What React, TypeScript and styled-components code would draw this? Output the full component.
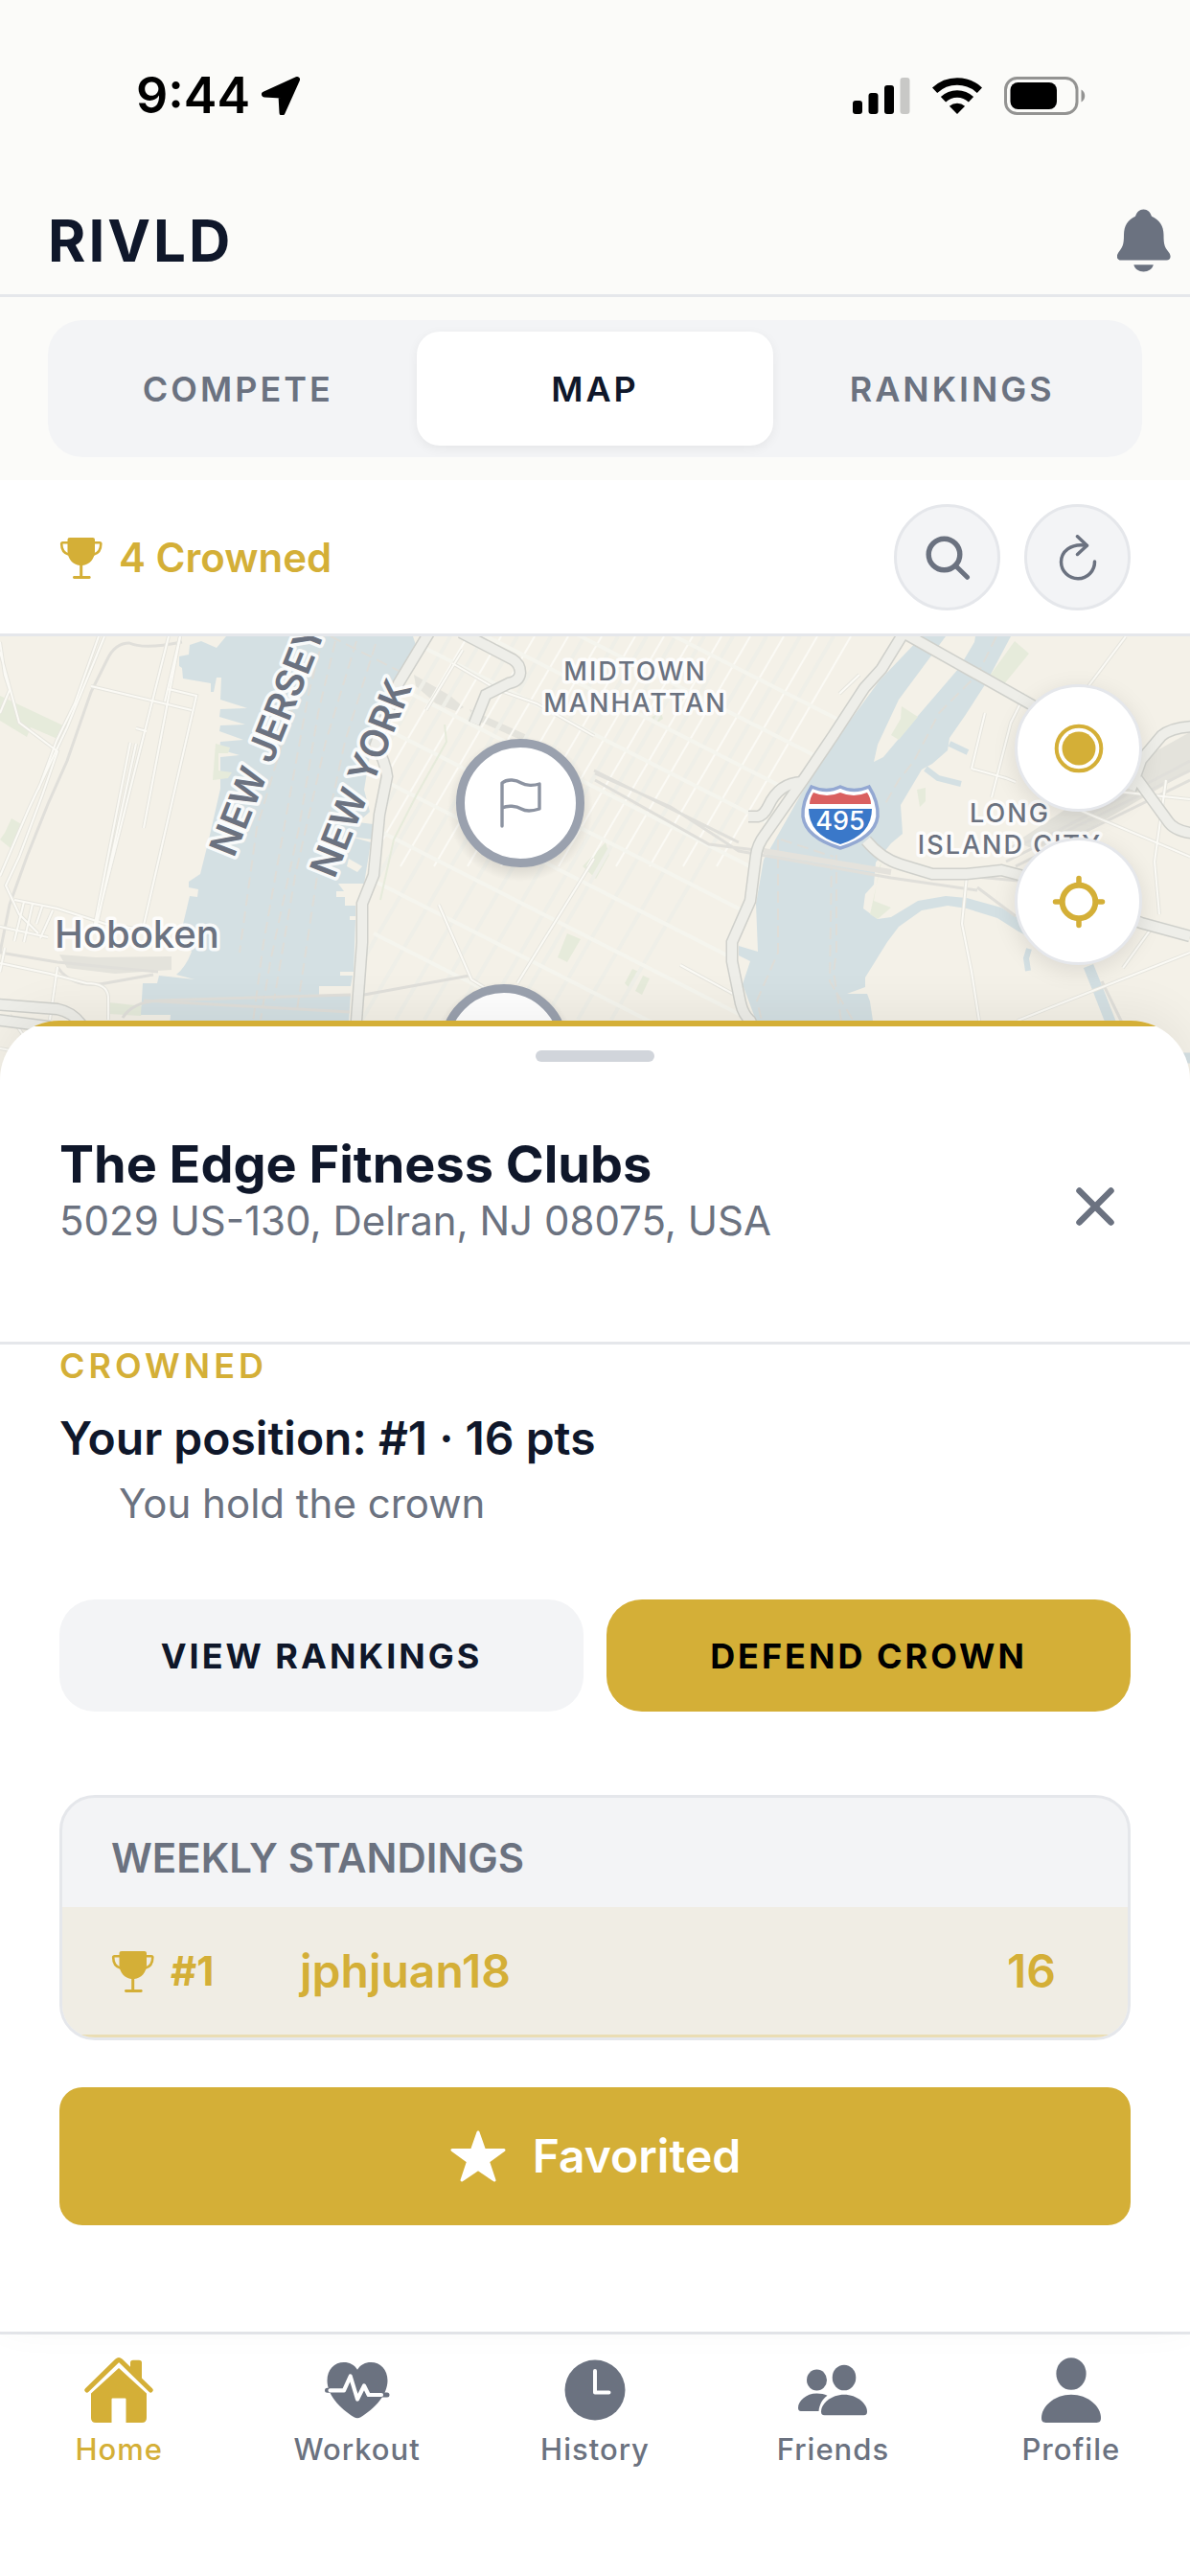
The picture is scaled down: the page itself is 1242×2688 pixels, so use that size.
import React from 'react';
import styled, { createGlobalStyle } from 'styled-components';

const colors = {
  gold: '#D4AF37',
  text: '#0F172A',
  secondaryText: '#6B7280',
  border: '#E5E7EB',
  surface: '#F3F4F6',
  background: '#FBFBF9',
  land: '#F4F1E8',
  water: '#D4E0E3',
  park: '#E6EBDB',
  roadCase: '#CFD0CB',
  road: '#EEEEE9',
  street: '#FBFAF5',
  marker: '#9AA1AE',
};

const GlobalStyle = createGlobalStyle`
  * {
    box-sizing: border-box;
  }
  body {
    margin: 0;
    background: #fff;
    color: ${colors.text};
    font-family: Inter, 'Liberation Sans', sans-serif;
  }
  button {
    font-family: inherit;
    border: none;
    padding: 0;
    cursor: pointer;
  }
  svg {
    display: block;
    flex: none;
  }
`;

const Screen = styled.div`
  min-height: 100vh;
  display: flex;
  flex-direction: column;
`;

const StatusBar = styled.div`
  display: flex;
  justify-content: space-between;
  align-items: center;
  height: 195px;
  padding: 4px 108px 0 142px;
  background: ${colors.background};
`;

const StatusGroup = styled.div<{ $gap: number }>`
  display: flex;
  align-items: center;
  gap: ${({ $gap }) => $gap}px;
`;

const Clock = styled.span`
  font-size: 52px;
  line-height: 66px;
  font-weight: 600;
  color: #000;
`;

const Header = styled.header`
  display: flex;
  justify-content: space-between;
  align-items: center;
  height: 115px;
  padding: 0 20px 0 50px;
  border-bottom: 3px solid ${colors.border};
  background: ${colors.background};
`;

const Brand = styled.h1`
  margin: 0;
  font-size: 60px;
  line-height: 72px;
  font-weight: 700;
  letter-spacing: 3px;
`;

const PlainButton = styled.button`
  display: flex;
  background: transparent;
`;

const SegmentWrap = styled.div`
  padding: 24px 50px;
  background: ${colors.background};
`;

const Segments = styled.div`
  display: flex;
  padding: 12px;
  border-radius: 36px;
  background: ${colors.surface};
`;

const Segment = styled.button<{ $active?: boolean }>`
  flex: 1;
  height: 119px;
  border-radius: 24px;
  font-size: 36px;
  line-height: 44px;
  font-weight: 600;
  letter-spacing: 3px;
  color: ${({ $active }) => ($active ? colors.text : colors.secondaryText)};
  background: ${({ $active }) => ($active ? '#fff' : 'transparent')};
  box-shadow: ${({ $active }) => ($active ? '0 3px 12px rgba(0, 0, 0, 0.06)' : 'none')};
`;

const Toolbar = styled.div`
  display: flex;
  justify-content: space-between;
  align-items: center;
  padding: 25px 62px 24px 62px;
  border-bottom: 3px solid ${colors.border};
`;

const CrownedCount = styled.div`
  display: flex;
  align-items: center;
  gap: 16px;
  font-size: 42px;
  line-height: 56px;
  font-weight: 600;
  color: ${colors.gold};
`;

const ToolbarActions = styled.div`
  display: flex;
  gap: 25px;
`;

const RoundButton = styled.button`
  display: flex;
  align-items: center;
  justify-content: center;
  width: 111px;
  height: 111px;
  border: 3px solid ${colors.border};
  border-radius: 50%;
  background: ${colors.surface};
`;

const MapArea = styled.div`
  position: relative;
  height: 464px;
  background: ${colors.land};
  overflow: hidden;
`;

const MapCanvas = styled.svg`
  width: 100%;
  height: 100%;
`;

const MapControls = styled.div`
  position: absolute;
  top: 50px;
  right: 50px;
  display: flex;
  flex-direction: column;
  gap: 27px;
`;

const MapButton = styled(RoundButton)`
  width: 133px;
  height: 133px;
  background: #fff;
  box-shadow: 0 6px 24px rgba(0, 0, 0, 0.1);
`;

const Sheet = styled.section`
  position: relative;
  flex: 1;
  margin-top: -63px;
  border-radius: 62px 62px 0 0;
  background: linear-gradient(${colors.gold} 0 6px, #fff 6px);
  box-shadow: 0 -12px 48px rgba(0, 0, 0, 0.06);
`;

const Handle = styled.div`
  padding: 31px 0 0;

  &::before {
    content: '';
    display: block;
    width: 124px;
    height: 12px;
    margin: 0 auto;
    border-radius: 6px;
    background: #d1d5db;
  }
`;

const SheetHeader = styled.div`
  display: flex;
  justify-content: space-between;
  align-items: flex-start;
  padding: 76px 62px 66px;
  border-bottom: 3px solid ${colors.border};
`;

const GymName = styled.h2`
  margin: 0;
  font-size: 54px;
  line-height: 62px;
  font-weight: 700;
`;

const Address = styled.p`
  margin: 0;
  font-size: 42px;
  line-height: 56px;
  color: ${colors.secondaryText};
`;

const CloseButton = styled(PlainButton)`
  align-items: center;
  justify-content: center;
  width: 74px;
  height: 150px;
`;

const SheetBody = styled.div`
  padding: 0 62px 111px;
`;

const StatusLabel = styled.div`
  font-size: 36px;
  line-height: 44px;
  font-weight: 600;
  letter-spacing: 4px;
  color: ${colors.gold};
`;

const Position = styled.div`
  margin-top: 24px;
  font-size: 48px;
  line-height: 60px;
  font-weight: 600;
`;

const Hint = styled.p`
  margin: 10px 0 0;
  padding-left: 62px;
  font-size: 42px;
  line-height: 56px;
  color: ${colors.secondaryText};
`;

const Actions = styled.div`
  display: flex;
  gap: 24px;
  margin-top: 72px;
`;

const ActionButton = styled.button<{ $primary?: boolean }>`
  flex: 1;
  height: 117px;
  border-radius: 37px;
  font-size: 36px;
  line-height: 44px;
  font-weight: 700;
  letter-spacing: 3px;
  color: ${({ $primary }) => ($primary ? '#000' : colors.text)};
  background: ${({ $primary }) => ($primary ? colors.gold : colors.surface)};
`;

const StandingsCard = styled.div`
  margin-top: 87px;
  border: 3px solid ${colors.border};
  border-radius: 37px;
  background: ${colors.surface};
  overflow: hidden;
`;

const StandingsTable = styled.table`
  width: 100%;
  border-collapse: separate;
  border-spacing: 0;
  text-align: left;
`;

const StandingsTitle = styled.th`
  height: 114px;
  padding: 12px 51px 0;
  font-size: 42px;
  line-height: 56px;
  font-weight: 600;
  color: ${colors.secondaryText};
`;

const Cell = styled.td`
  height: 136px;
  padding: 0;
  border-bottom: 3px solid #eaddb3;
  background: #f0ede4;
  font-size: 48px;
  line-height: 60px;
  font-weight: 600;
  color: ${colors.gold};
`;

const RankCell = styled(Cell)`
  width: 248px;
  padding-left: 51px;
`;

const ScoreCell = styled(Cell)`
  padding-right: 75px;
  text-align: right;
`;

const Rank = styled.div`
  display: flex;
  align-items: center;
  gap: 16px;
  font-size: 42px;
  font-weight: 700;
`;

const FavoriteButton = styled.button`
  display: flex;
  align-items: center;
  justify-content: center;
  gap: 27px;
  width: 100%;
  height: 144px;
  margin-top: 49px;
  border-radius: 24px;
  font-size: 48px;
  line-height: 60px;
  font-weight: 600;
  color: #fff;
  background: ${colors.gold};
`;

const TabBar = styled.nav`
  display: flex;
  padding: 21px 0 113px;
  border-top: 3px solid ${colors.border};
  background: #fff;
`;

const Tab = styled.a<{ $active?: boolean }>`
  flex: 1;
  display: flex;
  flex-direction: column;
  align-items: center;
  gap: 8px;
  font-size: 31px;
  line-height: 38px;
  font-weight: 500;
  letter-spacing: 1px;
  text-decoration: none;
  color: ${({ $active }) => ($active ? colors.gold : colors.secondaryText)};
`;

const LocationArrow = () => (
  <svg width="40" height="40" viewBox="0 0 40 40">
    <path d="M37 3 3 18.5 20.5 19.5 21.5 37.5Z" stroke="#000" strokeWidth="6" strokeLinejoin="round" />
  </svg>
);

const Signal = () => (
  <svg width="60" height="38" viewBox="0 0 60 38">
    <rect y="24" width="10" height="14" rx="3" />
    <rect x="16.5" y="16" width="10" height="22" rx="3" />
    <rect x="33" y="8" width="10" height="30" rx="3" />
    <rect x="49.5" width="10" height="38" rx="3" fill="#C8C8C6" />
  </svg>
);

const Wifi = () => (
  <svg width="52" height="38" viewBox="0 0 52 38">
    <g fill="none" stroke="#000" strokeWidth="7.6">
      <path d="M2.6 13.3A34 34 0 0 1 49.4 13.3" />
      <path d="M11.5 22.8A21 21 0 0 1 40.5 22.8" />
    </g>
    <path d="M26 38 17.9 29.8A12.3 12.3 0 0 1 34.1 29.8Z" />
  </svg>
);

const Battery = () => (
  <svg width="86" height="40" viewBox="0 0 86 40">
    <rect x="1.5" y="1.5" width="74.5" height="37" rx="12" fill="none" stroke="#939392" strokeWidth="3" />
    <rect x="6.5" y="6" width="48.5" height="28" rx="8" />
    <path d="M80.5 13.5c5 2.5 5 10.5 0 13Z" fill="#939392" />
  </svg>
);

const Bell = () => (
  <svg width="56" height="66" viewBox="0 0 56 66" fill={colors.secondaryText}>
    <path d="M27.5.5c4.5 0 7 3 8.5 7.3 8 3.5 12.5 10 12.5 19.2 0 11 1.2 13 5.5 18.5 3 4 1.5 8-2.5 8H4C-.2 53.5-1.5 49.5 1.3 45.500 5.6 39.5 7 38 7 27 7 17.8 11 11.3 19 7.8 20.5 3.5 23 .5 27.5.5Z" />
    <path d="M17.3 58.3h20.5c-1 4.2-5.3 7.2-10.3 7.2s-9.200-3-10.200-7.2Z" />
  </svg>
);

const Trophy = () => (
  <svg width="46" height="44" viewBox="0 0 46 44" fill={colors.gold}>
    <path d="M11 1h23.5c1.8 0 2.5.8 2.5 2.5v12C37 23 31 29.5 24.2 30v11h7c2 0 2 2.9 0 2.9H15.5c-2 0-2-2.900 0-2.900H21.2V30C14.5 29.5 8.5 23 8.5 15.5v-12C8.5 1.8 9.2 1 11 1Z" />
    <path d="M9 6.2H3.500c-1 0-1.300.5-1.300 1.300C2.200 13 5 17.500 10 18.800M36.500 6.200H42c1 0 1.300.5 1.300 1.300 0 5.500-2.800 10-7.800 11.300" fill="none" stroke={colors.gold} strokeWidth="2.6" />
  </svg>
);

const Search = () => (
  <svg width="48" height="48" viewBox="0 0 48 48" fill="none" stroke={colors.secondaryText} strokeLinecap="round">
    <circle cx="20.5" cy="20.5" r="16.3" strokeWidth="5.4" />
    <path d="M33 33 44.5 44.3" strokeWidth="5" />
  </svg>
);

const Refresh = () => (
  <svg width="48" height="48" viewBox="0 0 48 48" fill="none" stroke={colors.secondaryText} strokeWidth="3.5" strokeLinecap="round" strokeLinejoin="round">
    <path d="M32.500 10.800A17.600 17.600 0 1 0 41.500 27.800" stroke="none" />
    <path d="M33 11.200C16 8.500 6.500 18 6.500 28.500a17.500 17.500 0 0 0 35 -.5" />
    <path d="M23.500 1.800 33.500 11.200 23.500 20.500" />
  </svg>
);

const Target = () => (
  <svg width="56" height="56" viewBox="0 0 56 56">
    <circle cx="28" cy="28" r="23.3" fill="none" stroke={colors.gold} strokeWidth="4" />
    <circle cx="28" cy="28" r="17.5" fill={colors.gold} />
  </svg>
);

const Locate = () => (
  <svg width="56" height="56" viewBox="0 0 56 56" fill="none" stroke={colors.gold} strokeLinecap="round">
    <circle cx="28" cy="28" r="17.3" strokeWidth="6" />
    <path d="M28 3.5V9M28 47v5.5M3.5 28H9M47 28h5.5" strokeWidth="5.5" />
  </svg>
);

const Close = () => (
  <svg width="40" height="40" viewBox="0 0 40 40" stroke={colors.secondaryText} strokeWidth="6.5" strokeLinecap="round">
    <path d="M3.5 3.5 36.5 36.5M36.5 3.5 3.5 36.5" />
  </svg>
);

const Star = () => (
  <svg width="60" height="56" viewBox="0 0 60 56" fill="#fff" stroke="#fff" strokeWidth="3" strokeLinejoin="round">
    <path d="M30 3 36.5 21.5H57L40.5 33.5 47 53 30 41.5 13 53 19.5 33.5 3 21.5H23.5Z" />
  </svg>
);

const HomeIcon = () => (
  <svg width="72" height="72" viewBox="0 0 72 72" fill={colors.gold}>
    <path d="M48 18V8.5C48 6.5 49 5.7 51 5.7h6c2 0 3 .8 3 2.8V29Z" />
    <path d="M2.8 37 34 6.6Q36 4.6 38 6.6L69.2 37" fill="none" stroke={colors.gold} strokeWidth="5" strokeLinecap="round" strokeLinejoin="round" />
    <path d="M36 14 65 40.500V66q0 5-5 5H43.500V46.500q0-1-1-1h-13q-1 0-1 1V71H12q-5 0-5-5V40.500Z" />
  </svg>
);

const WorkoutIcon = () => (
  <svg width="72" height="72" viewBox="0 0 72 72" fill={colors.secondaryText}>
    <path d="M36 15.7C39 10.5 44.5 8 50 8c10 0 17.5 7.5 17.5 19 0 15-13 29-28 38.3-2.2 1.4-4.8 1.4-7 0C17.5 56 4.5 42 4.5 27 4.5 15.5 12 8 22 8c5.5 0 11 2.5 14 7.7Z" />
    <path d="M4.5 37.3H9M62 42h5" stroke={colors.secondaryText} strokeWidth="5" strokeLinecap="round" />
    <path d="M7.5 37.3H22L28.700 22.500 36 46.500 43 32.500 47.700 42H61" fill="none" stroke="#fff" strokeWidth="4.2" strokeLinecap="round" strokeLinejoin="round" />
  </svg>
);

const HistoryIcon = () => (
  <svg width="72" height="72" viewBox="0 0 72 72">
    <circle cx="36" cy="37" r="31.5" fill={colors.secondaryText} />
    <path d="M36 17V39.5H50.5" fill="none" stroke="#fff" strokeWidth="4" strokeLinecap="round" strokeLinejoin="round" />
  </svg>
);

const FriendsIcon = () => (
  <svg width="72" height="72" viewBox="0 0 72 72" fill={colors.secondaryText}>
    <ellipse cx="19.5" cy="26.5" rx="10.5" ry="11" />
    <path d="M19.5 40.5c4.5 0 8 .8 11 2.3-5.5 4-8.3 9.5-9 16.2H3c-2.2 0-3-1.3-3-3.5 0-7 8-15 19.5-15Z" />
    <ellipse cx="48" cy="24" rx="12.3" ry="13.3" />
    <path d="M48 41.7C61.5 41.7 72 51 72 59.5c0 2.6-1 3.8-3.5 3.8h-41c-2.5 0-3.5-1.2-3.5-3.8C24 51 34.5 41.7 48 41.7Z" />
  </svg>
);

const ProfileIcon = () => (
  <svg width="72" height="72" viewBox="0 0 72 72" fill={colors.secondaryText}>
    <ellipse cx="36" cy="20" rx="15.6" ry="16.8" />
    <path d="M36 41.7C53.5 41.7 67 54 67 66c0 3.4-1.2 4.9-4.5 4.9h-53C6.2 70.9 5 69.4 5 66 5 54 18.5 41.7 36 41.7Z" />
  </svg>
);

const highways = [
  'M944 -5 920 34 902 54 870 103 841 146 799 206 Q790 218 789 229L783 276 764 319V339L773 383Q776 395 783 401L815 466',
  'M946 -2 1076 71 1120 98',
  'M781 188H791Q797 187 802 177 813 153 837 152',
  'M904 213Q920 232 940 238L973 248H1009L1045 244 1064 249 1191 299 1242 313',
  'M1250 94Q1224 94 1212 104L1191 129 1180 160M1187 149 1219 193Q1226 204 1250 206',
  'M448 -4 416 49 392 113Q402 130 404 146L396 186 390 249 378 279V319L372 401 370 466',
  'M481 -4 535 24Q543 29 543 38 542 47 531 49L507 61 495 91',
  'M-5 384 60 389Q75 392 84 404L130 466',
  'M-5 400 50 407 90 430',
];

const streets = [
  'M103 0 78 70 59 109 40 160 M109 0 70 95 30 180 0 250',
  'M176 0 98 310 M188 0 150 200 M142 112 100 306 M136 111 98 305 M142 96 153 99',
  'M0 16 20 90 60 120 44 166 20 230 6 260 20 290 40 310 M0 6 5 40 10 56 0 80',
  'M95 52 200 77 M176 55 205 62 148 310 M188 0 172 68',
  'M15 275 60 284 110 300 148 306 M25 277 15 318M34 279 25 319M44 282 38 300M55 286 42 315',
  'M0 303 50 314 M0 341 52 352 90 362Q112 362 113 376V400 M60 345 52 400 M5 325 0 350',
  'M483 14 445 77 M472 28 520 56 560 70 620 104',
  'M458 280 492 358 505 366 M620 232 540 362',
  'M897 40 876 60M1014 138 1050 148 1060 152M1035 168 1055 90 1070 60M1028 80 1014 138',
  'M1130 60 1175 0M1210 290 1205 235 1217 150M1242 170 1100 155M1100 170 1242 230',
  'M1062 401 1120 378 1242 330M1009 250 1004 300 1014 350 1022 401M1172 346 1205 300',
  'M0 430 80 445M10 395 60 470M710 343 765 373',
];

const rails = [
  'M190 6Q150 14 135 7 120 7 112 24L95 58 70 130 50 175 28 230 10 280 0 330',
  'M0 330 60 340 110 345 165 350 M60 345Q75 368 110 362L160 353',
  'M128 398Q138 382 165 380L366 374M380 374 490 354M150 380 365 392',
  'M621 143 700 178 771 224 930 252 1020 265M621 150 740 217 797 224M620 140 771 215',
  'M1009 250 1063 255 1110 268M1020 262 1060 292M1150 360 1170 401 1190 440',
  'M1040 225 1100 205 1242 130M1050 235 1120 200 1242 140M1060 240 1130 205 1242 150',
];

const avenues = [430, 470, 505, 540, 575, 610, 645, 675, 705, 735, 765, 800, 835, 870];
const crossStreets = [-160, -110, -60, -15, 40, 90, 145, 200, 255, 310];

interface MarkerProps {
  x: number;
  y: number;
}

const Marker = ({ x, y }: MarkerProps) => (
  <g transform={`translate(${x} ${y})`}>
    <circle r="76" fill="url(#marker-shadow)" cy="6" />
    <circle r="62.5" fill="#fff" stroke={colors.marker} strokeWidth="9" />
    <path d="M-19 24V-21C-13 -26 -4 -24 1 -21S14 -18 20 -20V6C14 8 6 9 1 6S-13 2 -19 5" fill="none" stroke="#8C93A1" strokeWidth="3.4" strokeLinecap="round" strokeLinejoin="round" />
  </g>
);

const CityMap = () => (
  <MapCanvas viewBox="0 0 1242 464" preserveAspectRatio="xMidYMin slice" role="img" aria-label="Map">
    <defs>
      <clipPath id="manhattan">
        <path d="M446 0 392 113 404 146 390 249 378 279 372 464H800L764 330 789 229 870 103 944 0Z" />
      </clipPath>
      <radialGradient id="marker-shadow">
        <stop offset="0.8" stopOpacity="0.1" />
        <stop offset="1" stopOpacity="0" />
      </radialGradient>
    </defs>
    <rect width="1242" height="464" fill={colors.land} />
    <g fill={colors.park}>
      <path d="M0 62 68 94 60 107 32 95 28 105 0 88ZM5 205 12 190 24 197 12 222 0 212ZM114 382 150 386 147 396 113 394ZM582 335 592 310 606 316 592 340Z" />
      <path d="M608 240 632 215 636 228 622 253ZM652 362 660 347 667 350 658 368ZM663 370 671 354 678 357 670 374ZM680 84 690 80 692 86 686 90ZM957 160 966 158 966 172 960 178Z" />
    </g>
    <path
      fill={colors.water}
      d="M236 0 226 12 210 5 198 9 197 19 187 21V31L190 33 191 44 220 49V58H223L226 43H231L230 66 258 75 230 76 229 84 256 92 230 93 229 99 254 108 230 110 229 118 250 124 230 126V159L217 216 209 248 197 256V262L207 264 206 272 198 271 188 313 200 329Q194 345 184 353L203 358 166 354 164 362H149L147 395H178L172 464H370L364 401 366 374H333V365H366L368 354H355V350H369L371 296H365V292H371V281H360V272H351V266H359L353 258H380L387 215 366 209 389 212V196L374 194 386 183 380 160 390 100 396 86 414 49 434 9 431 0Z"
    />
    <path
      fill={colors.water}
      d="M962 0 918 46 874 106 837 163 807 216 797 233 789 279 791 329 771 323V333L783 339 775 363 789 401 815 464H920L911 401 908 381 905 373H884L903 366V356L926 319 938 303 962 286 989 281 1009 284 1041 294 1063 308 1085 320V306L1063 294 1045 283 1009 273 987 271 958 276 930 293 916 295 901 284 903 269 912 259 914 236 930 216 942 206 940 176 962 139 973 133 989 119 991 106 1007 83 1029 49 1055 0Z"
    />
    <path d="M987 0 938 66 916 113 912 131 922 126 958 83 1001 33 1017 6 1018 0Z" fill={colors.land} />
    <path d="M941 73 958 84 938 108 930 103 940 86ZM1059 5 1074 18 1047 51 1033 41ZM930 216 920 236 908 290 916 295 930 283 912 276 918 240Z" fill={colors.park} />
    <path d="M225 112 240 116 238 122 228 122 228 140 242 142 238 148 222 150Z" fill={colors.park} />
    <path d="M364 232 378 240 373 246 362 240Z" fill={colors.land} />
    <g fill="none" stroke={colors.water} strokeWidth="6">
      <path d="M966 138 979 148 1003 154M991 112 1010 121M1074 326 1071 336 1073 349" />
      <path d="M1136 344 1146 369 1162 410 1185 440H1242" strokeWidth="11" />
    </g>
    <path d="M432 40 470 62 484 74 476 78 455 70 434 52ZM490 76 550 103 548 110 494 86ZM62 332 100 335 179 334V348L120 352 70 346ZM1188 130 1242 100V140L1130 205 1080 222 1060 215Z" fill="#E4E3DC" />
    <g clipPath="url(#manhattan)" fill="none">
      {avenues.map((x) => (
        <path key={x} d={`M${x} 0 ${x - 232} 400`} stroke="#EFEFE8" strokeWidth="4" />
      ))}
      {avenues.map((x) => (
        <path key={x} d={`M${x + 18} 0 ${x - 122} 240`} stroke={colors.street} strokeWidth="2" />
      ))}
      {crossStreets.map((y) => (
        <path key={y} d={`M390 ${y} 940 ${y + 280}`} stroke="#F5F5EE" strokeWidth="4" />
      ))}
    </g>
    <g fill="none">
      <path d="M464 92 466 110 435 165 411 212 397 275" stroke={colors.park} strokeWidth="2" />
      <path d="M338 -2 322 60 300 180 275 320 264 402M350 5 332 80 312 200 282 340 272 400M372 5 340 110 308 250 286 380M392 8 360 110 334 230 310 390M345 0 420 38M310 60 268 200 250 330" stroke="#DEDDD8" strokeWidth="2" strokeDasharray="12 6" />
      <path d="M1040 0 1020 40 980 80 954 130 938 150 922 178M812 212V330L790 380 795 401M873 228V330L870 350 878 401M868 232 866 360 890 400M815 212 870 230" stroke="#DEDDD8" strokeWidth="2" strokeDasharray="12 6" />
      {rails.map((d) => (
        <path key={d} d={d} stroke="#E0DFDA" strokeWidth="3" />
      ))}
      {streets.map((d) => (
        <path key={d} d={d} stroke="#E6E5DE" strokeWidth="4" />
      ))}
      {streets.map((d) => (
        <path key={d} d={d} stroke={colors.street} strokeWidth="2" />
      ))}
      <path d="M797 224 930 246" stroke="#E4E2DC" strokeWidth="6" />
      {highways.map((d) => (
        <path key={d} d={d} stroke={colors.roadCase} strokeWidth="13" />
      ))}
      {highways.map((d) => (
        <path key={d} d={d} stroke={colors.road} strokeWidth="10" />
      ))}
    </g>
    <g
      fill={colors.secondaryText}
      stroke="#fff"
      strokeOpacity="0.85"
      strokeWidth="7"
      strokeLinejoin="round"
      paintOrder="stroke"
      fontFamily="Inter, 'Liberation Sans', sans-serif"
      fontWeight="500"
    >
      <g fontSize="40" fontWeight="600">
        <text transform="translate(244 232) rotate(-68)">NEW JERSEY</text>
        <text transform="translate(349 254) rotate(-68)">NEW YORK</text>
      </g>
      <text x="57" y="325" fontSize="40">Hoboken</text>
      <g fontSize="27" letterSpacing="2" textAnchor="middle">
        <text x="663" y="46">MIDTOWN</text>
        <text x="663" y="79">MANHATTAN</text>
        <text x="1054" y="194">LONG</text>
        <text x="1054" y="227">ISLAND CITY</text>
      </g>
    </g>
    <g transform="translate(877 189)">
      <path d="M-30 -32Q-14 -25 0 -32 14 -25 30 -32 40 -16 39 -1 36 21 0 32 -36 21 -39 -1 -40 -16 -30 -32Z" fill="#fff" stroke="#93A8D2" strokeWidth="3.5" />
      <path d="M-33 -9H33Q33 18 0 28 -33 18 -33 -9Z" fill="#3A78C9" />
      <path d="M-32 -14Q-32 -20 -28 -26 -14 -20 0 -26 14 -20 28 -26 32 -20 32 -14Z" fill="#DA6060" />
      <text y="13" fill="#fff" fontSize="27" fontWeight="500" textAnchor="middle">495</text>
    </g>
    <Marker x={543} y={174} />
    <Marker x={526} y={430} />
  </MapCanvas>
);

interface StandingProps {
  rank: number;
  name: string;
  score: number;
}

const StandingRow = ({ rank, name, score }: StandingProps) => (
  <tr>
    <RankCell>
      <Rank>
        <Trophy />
        {`#${rank}`}
      </Rank>
    </RankCell>
    <Cell>{name}</Cell>
    <ScoreCell>{score}</ScoreCell>
  </tr>
);

const tabs = [
  { label: 'Home', icon: <HomeIcon />, active: true },
  { label: 'Workout', icon: <WorkoutIcon /> },
  { label: 'History', icon: <HistoryIcon /> },
  { label: 'Friends', icon: <FriendsIcon /> },
  { label: 'Profile', icon: <ProfileIcon /> },
];

const App = () => {
  return (
    <Screen>
      <GlobalStyle />
      <StatusBar>
        <StatusGroup $gap={12}>
          <Clock>9:44</Clock>
          <LocationArrow />
        </StatusGroup>
        <StatusGroup $gap={23}>
          <Signal />
          <Wifi />
          <Battery />
        </StatusGroup>
      </StatusBar>
      <Header>
        <Brand>RIVLD</Brand>
        <PlainButton aria-label="Notifications">
          <Bell />
        </PlainButton>
      </Header>
      <SegmentWrap>
        <Segments>
          <Segment>COMPETE</Segment>
          <Segment $active>MAP</Segment>
          <Segment>RANKINGS</Segment>
        </Segments>
      </SegmentWrap>
      <Toolbar>
        <CrownedCount>
          <Trophy />
          4 Crowned
        </CrownedCount>
        <ToolbarActions>
          <RoundButton aria-label="Search">
            <Search />
          </RoundButton>
          <RoundButton aria-label="Refresh">
            <Refresh />
          </RoundButton>
        </ToolbarActions>
      </Toolbar>
      <MapArea>
        <CityMap />
        <MapControls>
          <MapButton aria-label="Toggle radius">
            <Target />
          </MapButton>
          <MapButton aria-label="My location">
            <Locate />
          </MapButton>
        </MapControls>
      </MapArea>
      <Sheet>
        <Handle />
        <SheetHeader>
          <div>
            <GymName>The Edge Fitness Clubs</GymName>
            <Address>5029 US-130, Delran, NJ 08075, USA</Address>
          </div>
          <CloseButton aria-label="Close">
            <Close />
          </CloseButton>
        </SheetHeader>
        <SheetBody>
          <StatusLabel>CROWNED</StatusLabel>
          <Position>Your position: #1 · 16 pts</Position>
          <Hint>You hold the crown</Hint>
          <Actions>
            <ActionButton>VIEW RANKINGS</ActionButton>
            <ActionButton $primary>DEFEND CROWN</ActionButton>
          </Actions>
          <StandingsCard>
            <StandingsTable>
              <thead>
                <tr>
                  <StandingsTitle colSpan={3}>WEEKLY STANDINGS</StandingsTitle>
                </tr>
              </thead>
              <tbody>
                <StandingRow rank={1} name="jphjuan18" score={16} />
              </tbody>
            </StandingsTable>
          </StandingsCard>
          <FavoriteButton>
            <Star />
            Favorited
          </FavoriteButton>
        </SheetBody>
      </Sheet>
      <TabBar>
        {tabs.map(({ label, icon, active }) => (
          <Tab key={label} href="#" $active={active}>
            {icon}
            {label}
          </Tab>
        ))}
      </TabBar>
    </Screen>
  );
};

export default App;
